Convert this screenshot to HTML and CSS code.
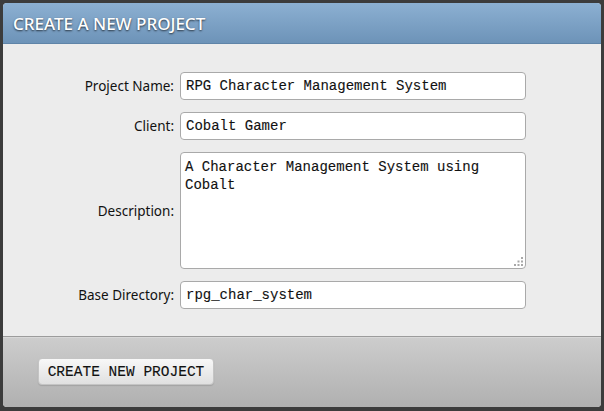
FILE: index.html
```html
<!DOCTYPE html>
<html>
<head>
<meta charset="utf-8">
<link rel="stylesheet" href="styles.css">
</head>
<body>
<div class="panel">
  <div class="panel-header">
    <h1 class="panel-title">CREATE A NEW PROJECT</h1>
  </div>
  <form class="panel-body">
    <div class="form-row">
      <label class="form-label">Project Name:</label>
      <input class="form-input" type="text" value="RPG Character Management System">
    </div>
    <div class="form-row">
      <label class="form-label">Client:</label>
      <input class="form-input" type="text" value="Cobalt Gamer">
    </div>
    <div class="form-row">
      <label class="form-label">Description:</label>
      <div class="textarea-wrap">
        <textarea class="form-input form-textarea">A Character Management System using Cobalt</textarea>
        <svg class="grip" width="10" height="10" viewBox="0 0 10 10">
          <rect x="7" y="0" width="2" height="2" fill="#a8a8a8"/>
          <rect x="3.5" y="3.5" width="2" height="2" fill="#a8a8a8"/>
          <rect x="7" y="3.5" width="2" height="2" fill="#a8a8a8"/>
          <rect x="0" y="7" width="2" height="2" fill="#a8a8a8"/>
          <rect x="3.5" y="7" width="2" height="2" fill="#a8a8a8"/>
          <rect x="7" y="7" width="2" height="2" fill="#a8a8a8"/>
        </svg>
      </div>
    </div>
    <div class="form-row">
      <label class="form-label">Base Directory:</label>
      <input class="form-input" type="text" value="rpg_char_system">
    </div>
  </form>
  <div class="panel-footer">
    <button class="btn" type="button">CREATE NEW PROJECT</button>
  </div>
</div>
</body>
</html>
```
FILE: styles.css
```css
html, body {
  margin: 0;
  padding: 0;
}
body {
  background: #3c3c3c;
  padding: 3px;
  height: 411px;
  box-sizing: border-box;
}
.panel {
  background: #ececec;
  border-radius: 4px;
  height: 404px;
  width: 598px;
  display: flex;
  flex-direction: column;
  overflow: hidden;
}
.panel-header {
  height: 40px;
  background: linear-gradient(#8cb0d2, #6d93b8);
  border-bottom: 1px solid #5f84a8;
  display: flex;
  align-items: center;
  padding-left: 10px;
  flex: none;
}
.panel-title {
  margin: 0;
  font-family: "Noto Sans", sans-serif;
  font-weight: 500;
  font-size: 17px;
  color: #ffffff;
  text-shadow: 0 1px 2px rgba(0,0,0,0.7);
}
.panel-body {
  flex: 1;
  display: flex;
  flex-direction: column;
  gap: 12px;
  padding-top: 28px;
  margin: 0;
  background: #ececec;
}
.form-row {
  display: flex;
  align-items: center;
  gap: 6px;
}
.form-label {
  width: 171px;
  text-align: right;
  font-family: "Noto Sans", sans-serif;
  font-size: 13.5px;
  color: #111;
}
.form-input {
  width: 346px;
  height: 28px;
  box-sizing: border-box;
  border: 1px solid #a9a9a9;
  border-radius: 4px;
  background: #fff;
  font-family: "Liberation Mono", monospace;
  font-size: 14px;
  color: #111;
  -webkit-text-stroke: 0.12px #111;
  padding: 0 5px;
  margin: 0;
  outline: none;
}
.textarea-wrap {
  position: relative;
  display: flex;
}
.form-textarea {
  height: 117px;
  padding: 5px 4px 3px;
  resize: none;
  line-height: 18px;
}
.grip {
  position: absolute;
  right: 2px;
  bottom: 2px;
}
.panel-footer {
  height: 71px;
  flex: none;
  border-top: 1px solid #9c9c9c;
  background: linear-gradient(#cdcdcd, #b0b0b0);
  box-shadow: inset 0 1px 0 #d8d8d8;
  box-sizing: border-box;
  padding: 21px 0 0 35px;
}
.btn {
  width: 176px;
  height: 27px;
  border: 1px solid #c4c4c4;
  border-radius: 4px;
  background: linear-gradient(#f8f8f8, #e0e0e0);
  box-shadow: 0 1px 1px rgba(0,0,0,0.12);
  font-family: "Liberation Mono", monospace;
  font-size: 14.5px;
  color: #111;
  -webkit-text-stroke: 0.12px #111;
  padding: 0;
}
```
